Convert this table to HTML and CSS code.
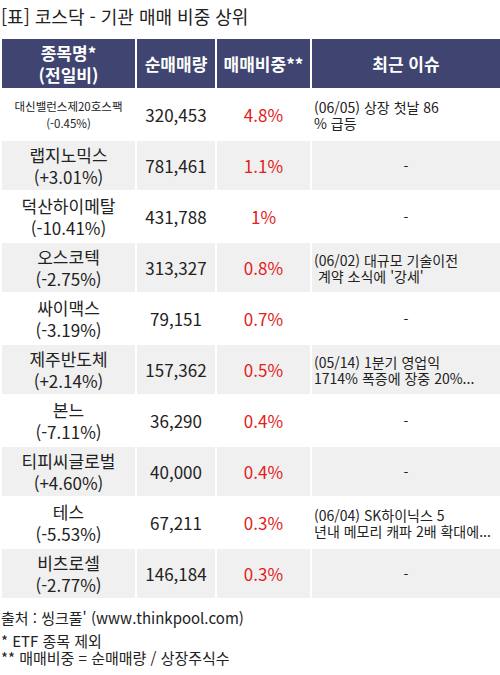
FILE: index.html
```html
<!DOCTYPE html>
<html lang="ko">
<head>
    <meta charset="UTF-8">
    <meta name="viewport" content="width=device-width, initial-scale=1.0">
    <title>코스닥 - 기관 매매 비중 상위</title>
    <link rel="stylesheet" href="styles.css">
</head>
<body>
    <h1 class="title">[표] 코스닥 - 기관 매매 비중 상위</h1>

    <table class="rank-table">
        <colgroup>
            <col class="c-name">
            <col class="c-vol">
            <col class="c-ratio">
            <col class="c-issue">
        </colgroup>
        <thead>
            <tr>
                <th>종목명*<br>(전일비)</th>
                <th>순매매량</th>
                <th>매매비중**</th>
                <th>최근 이슈</th>
            </tr>
        </thead>
        <tbody>
            <tr>
                <td class="name small">대신밸런스제20호스팩<br>(-0.45%)</td>
                <td>320,453</td>
                <td class="ratio">4.8%</td>
                <td class="issue">(06/05) 상장 첫날 86<br>% 급등</td>
            </tr>
            <tr>
                <td class="name">랩지노믹스<br>(+3.01%)</td>
                <td>781,461</td>
                <td class="ratio">1.1%</td>
                <td class="none">-</td>
            </tr>
            <tr>
                <td class="name">덕산하이메탈<br>(-10.41%)</td>
                <td>431,788</td>
                <td class="ratio">1%</td>
                <td class="none">-</td>
            </tr>
            <tr>
                <td class="name">오스코텍<br>(-2.75%)</td>
                <td>313,327</td>
                <td class="ratio">0.8%</td>
                <td class="issue">(06/02) 대규모 기술이전<br>&nbsp;계약 소식에 '강세'</td>
            </tr>
            <tr>
                <td class="name">싸이맥스<br>(-3.19%)</td>
                <td>79,151</td>
                <td class="ratio">0.7%</td>
                <td class="none">-</td>
            </tr>
            <tr>
                <td class="name">제주반도체<br>(+2.14%)</td>
                <td>157,362</td>
                <td class="ratio">0.5%</td>
                <td class="issue">(05/14) 1분기 영업익<br>1714% 폭증에 장중 20%...</td>
            </tr>
            <tr>
                <td class="name">본느<br>(-7.11%)</td>
                <td>36,290</td>
                <td class="ratio">0.4%</td>
                <td class="none">-</td>
            </tr>
            <tr>
                <td class="name">티피씨글로벌<br>(+4.60%)</td>
                <td>40,000</td>
                <td class="ratio">0.4%</td>
                <td class="none">-</td>
            </tr>
            <tr>
                <td class="name">테스<br>(-5.53%)</td>
                <td>67,211</td>
                <td class="ratio">0.3%</td>
                <td class="issue">(06/04) SK하이닉스 5<br>년내 메모리 캐파 2배 확대에...</td>
            </tr>
            <tr>
                <td class="name">비츠로셀<br>(-2.77%)</td>
                <td>146,184</td>
                <td class="ratio">0.3%</td>
                <td class="none">-</td>
            </tr>
        </tbody>
    </table>

    <p class="source">출처 : 씽크풀' (www.thinkpool.com)</p>
    <p class="note">* ETF 종목 제외<br>** 매매비중 = 순매매량 / 상장주식수</p>
</body>
</html>
```

FILE: styles.css
```css
body {
    margin: 0;
    font-family: "Noto Sans CJK KR", "Noto Sans", sans-serif;
    color: #222;
    background-color: #fff;
}
.title {
    margin: 0;
    padding: 4px 0 0 1px;
    height: 33px;
    font-size: 18px;
    font-weight: normal;
    line-height: 25px;
    color: #222;
}
.rank-table {
    width: 500px;
    border-collapse: collapse;
    table-layout: fixed;
}
.c-name { width: 135px; }
.c-vol { width: 80px; }
.c-ratio { width: 95px; }
.c-issue { width: 190px; }
.rank-table th,
.rank-table td {
    border: 2px solid #fff;
    text-align: center;
    padding: 0;
    height: 49px;
}
.rank-table th {
    background-color: #3f4570;
    color: #fff;
    font-size: 17px;
    font-weight: bold;
    line-height: 22px;
}
.rank-table td {
    font-size: 17px;
    line-height: 22px;
}
.rank-table tbody tr:nth-child(even) td {
    background-color: #f0f0f0;
}
.rank-table td.small {
    font-size: 11.5px;
    line-height: 17px;
}
.ratio {
    color: #e3201b;
}
.rank-table td.none {
    font-size: 14px;
}
.rank-table td.issue {
    text-align: left;
    padding-left: 2px;
    font-size: 14px;
    line-height: 16px;
    white-space: nowrap;
    overflow: hidden;
}
.source {
    margin: 8px 0 0 1px;
    font-size: 15px;
    line-height: 20px;
}
.note {
    margin: 4px 0 0 1px;
    font-size: 15px;
    line-height: 17px;
}
```
